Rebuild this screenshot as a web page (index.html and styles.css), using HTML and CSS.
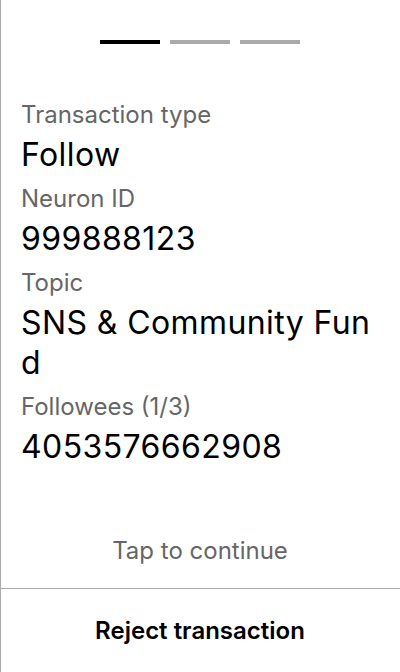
FILE: index.html
```html
<!DOCTYPE html>
<html>
<head>
<meta charset="utf-8">
<link rel="stylesheet" href="styles.css">
</head>
<body>
<div class="screen">
  <div class="progress">
    <span class="bar active"></span>
    <span class="bar"></span>
    <span class="bar"></span>
  </div>
  <div class="fields">
    <div class="field">
      <div class="label">Transaction type</div>
      <div class="value">Follow</div>
    </div>
    <div class="field">
      <div class="label">Neuron ID</div>
      <div class="value">999888123</div>
    </div>
    <div class="field">
      <div class="label">Topic</div>
      <div class="value">SNS &amp; Community Fund</div>
    </div>
    <div class="field">
      <div class="label">Followees (1/3)</div>
      <div class="value">4053576662908</div>
    </div>
  </div>
  <div class="spacer"></div>
  <div class="tap">Tap to continue</div>
  <div class="footer">Reject transaction</div>
</div>
</body>
</html>
```
FILE: styles.css
```css
html, body {
  margin: 0;
  padding: 0;
  background: #fff;
}
.screen {
  width: 400px;
  height: 672px;
  box-sizing: border-box;
  border-left: 1px solid #aaaaaa;
  display: flex;
  flex-direction: column;
  font-family: Inter, "Noto Sans", sans-serif;
  color: #000;
}
.progress {
  display: flex;
  justify-content: center;
  gap: 10px;
  padding-top: 40px;
  margin-left: -1px;
}
.bar {
  width: 60px;
  height: 4px;
  background: #aaaaaa;
}
.bar.active {
  background: #000;
}
.fields {
  padding: 57px 24px 0 20px;
  display: flex;
  flex-direction: column;
}
.field {
  display: flex;
  flex-direction: column;
  padding-bottom: 10px;
}
.label {
  font-size: 24px;
  line-height: 28px;
  color: #666666;
}
.value {
  margin-top: 6px;
  font-size: 32px;
  line-height: 40px;
  letter-spacing: 0.4px;
  word-break: break-all;
}
.spacer {
  flex: 1;
}
.tap {
  text-align: center;
  font-size: 24px;
  line-height: 28px;
  color: #666666;
  padding-bottom: 23px;
  margin-left: -1px;
}
.footer {
  border-top: 1px solid #aaaaaa;
  margin-left: -1px;
  height: 83px;
  display: flex;
  align-items: center;
  justify-content: center;
  font-size: 24px;
  font-weight: 600;
}
```
